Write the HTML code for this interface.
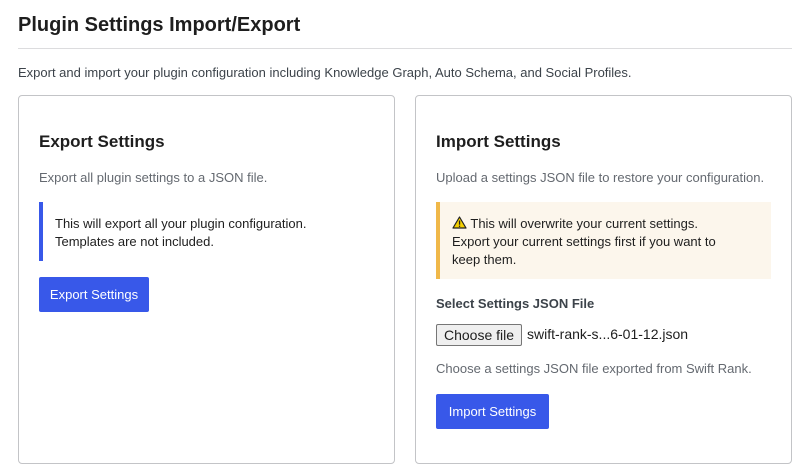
<!DOCTYPE html><html><head><style>
body{margin:0;width:805px;height:474px;background:#fff;font-family:"Liberation Sans",sans-serif;color:#1e1e1e;position:relative;overflow:hidden}
.a{position:absolute;white-space:nowrap}
.card{position:absolute;top:95px;width:377px;height:369px;border:1px solid #c3c4c7;border-radius:4px;box-sizing:border-box}
h2{margin:0;font-size:17px;font-weight:600}
.btn{position:absolute;background:#3858e9;color:#fff;font-size:13px;border-radius:2px;display:flex;align-items:center;justify-content:center}
.g{color:#646970;font-size:13px}
</style></head><body>
<div class="a" style="left:18px;top:14px;font-size:20px;font-weight:600">Plugin Settings Import/Export</div>
<div class="a" style="left:18px;top:48px;width:774px;height:1px;background:#dcdcde"></div>
<div class="a" style="left:18px;top:65px;font-size:13px;color:#3c434a">Export and import your plugin configuration including Knowledge Graph, Auto Schema, and Social Profiles.</div>
<div class="card" style="left:18px"></div>
<div class="card" style="left:415px"></div>
<h2 class="a" style="left:39px;top:132px">Export Settings</h2>
<div class="a g" style="left:39px;top:170px">Export all plugin settings to a JSON file.</div>
<div class="a" style="left:39px;top:202px;width:336px;height:59px;border-left:4px solid #3858e9;box-sizing:border-box;padding:13px 0 0 12px;font-size:13px;line-height:18px;white-space:normal">This will export all your plugin configuration.<br>Templates are not included.</div>
<div class="btn" style="left:39px;top:277px;width:110px;height:35px">Export Settings</div>
<h2 class="a" style="left:436px;top:132px">Import Settings</h2>
<div class="a g" style="left:436px;top:170px">Upload a settings JSON file to restore your configuration.</div>
<div class="a" style="left:436px;top:202px;width:335px;height:77px;border-left:4px solid #f0b849;background:#fcf6ec;box-sizing:border-box;padding:13px 0 0 12px;font-size:13px;line-height:18px;white-space:normal"><svg width="15" height="13" viewBox="0 0 15 13" style="vertical-align:-1px"><path d="M7.5 1 L14 12 L1 12 Z" fill="#f5d000" stroke="#222" stroke-width="1.2" stroke-linejoin="round"/><rect x="6.9" y="4.5" width="1.3" height="4.2" fill="#222"/><rect x="6.9" y="9.6" width="1.3" height="1.3" fill="#222"/></svg> This will overwrite your current settings.<br>Export your current settings first if you want to<br>keep them.</div>
<div class="a" style="left:436px;top:296px;font-size:13px;font-weight:600;color:#3c434a">Select Settings JSON File</div>
<div class="a" style="left:436px;top:324px;width:84px;height:20px;border:1px solid #767676;border-radius:2px;background:#efefef;font-size:14px;text-align:center;line-height:20px">Choose file</div>
<div class="a" style="left:527px;top:326px;font-size:14px">swift-rank-s...6-01-12.json</div>
<div class="a g" style="left:436px;top:361px">Choose a settings JSON file exported from Swift Rank.</div>
<div class="btn" style="left:436px;top:394px;width:113px;height:35px">Import Settings</div>
</body></html>
